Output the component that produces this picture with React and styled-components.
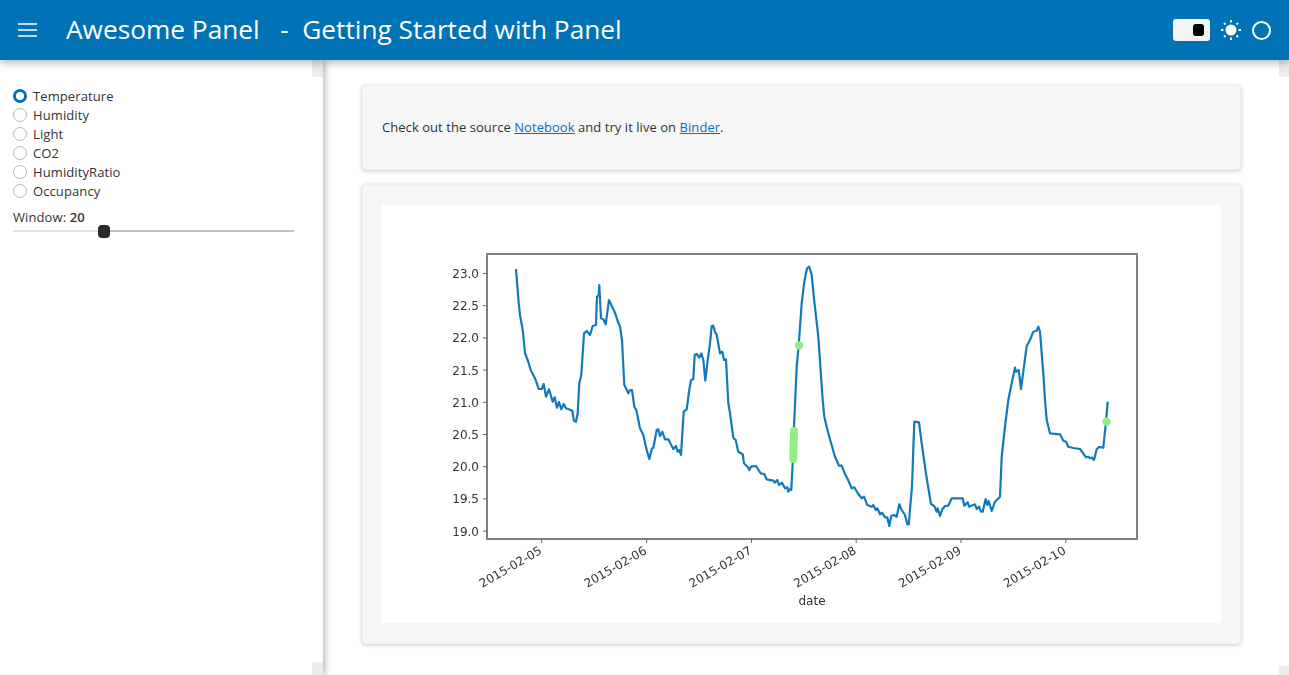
import React from "react";
import styled, { createGlobalStyle } from "styled-components";

const GlobalStyle = createGlobalStyle`
  html, body {
    margin: 0;
    padding: 0;
    height: 100%;
    overflow: hidden;
    background: #ffffff;
    font-family: "Open Sans", "Noto Sans", sans-serif;
    color: #333333;
  }
  #root { height: 100%; }
`;

const Page = styled.div`
  height: 100vh;
  display: flex;
  flex-direction: column;
  overflow: hidden;
`;

const Header = styled.header`
  position: relative;
  z-index: 3;
  height: 60px;
  flex: none;
  display: flex;
  align-items: center;
  padding: 0 18px 0 18px;
  background: #0072b5;
  color: #ffffff;
  box-shadow: 0 3px 8px rgba(0, 0, 0, 0.28);
`;

const MenuIcon = styled.svg`
  width: 19px;
  height: 14px;
  flex: none;
  margin-right: 29px;
`;

const Title = styled.h1`
  margin: 0;
  flex: 1;
  font-size: 26.25px;
  font-weight: 400;
  white-space: pre;
  line-height: 59px;
  height: 60px;
`;

const HeaderTools = styled.div`
  display: flex;
  align-items: center;
`;

const Toggle = styled.div`
  width: 37px;
  height: 22px;
  box-sizing: border-box;
  padding-right: 6px;
  display: flex;
  align-items: center;
  justify-content: flex-end;
  background: #f4f4f4;
  border-radius: 3px;
  margin-right: 10px;
`;

const ToggleKnob = styled.span`
  width: 11px;
  height: 12px;
  background: #000000;
  border-radius: 3px;
`;

const SunIcon = styled.svg`
  width: 22px;
  height: 22px;
  margin-right: 10px;
`;

const MoonRing = styled.span`
  width: 19px;
  height: 19px;
  box-sizing: border-box;
  border: 2.5px solid #ffffff;
  border-radius: 50%;
`;

const Body = styled.div`
  position: relative;
  flex: 1;
  display: flex;
  min-height: 0;
`;

const Sidebar = styled.aside`
  position: relative;
  z-index: 2;
  width: 323px;
  flex: none;
  box-sizing: border-box;
  padding: 26px 29px 0 13px;
  background: #ffffff;
  box-shadow: 2px 0 7px rgba(0, 0, 0, 0.3);
`;

const ScrollStub = styled.div`
  position: absolute;
  right: ${(p) => p.$right}px;
  ${(p) => (p.$bottom ? "bottom: 0;" : "top: 0;")}
  width: ${(p) => p.$width}px;
  height: ${(p) => p.$height}px;
  background: #ececec;
`;

const RadioRow = styled.label`
  display: flex;
  align-items: center;
  height: 19px;
  font-size: 13px;
  letter-spacing: 0.1px;
`;

const RadioDot = styled.span`
  width: 14px;
  height: 14px;
  flex: none;
  box-sizing: border-box;
  margin-right: 6px;
  border-radius: 50%;
  background: #ffffff;
  border: ${(p) => (p.$checked ? "3.5px solid #0072b5" : "1px solid #b9b9b9")};
`;

const SliderLabel = styled.div`
  margin-top: 8px;
  height: 19px;
  line-height: 19px;
  font-size: 13px;
  letter-spacing: 0.1px;
  b { font-weight: 600; }
`;

const SliderTrack = styled.div`
  position: relative;
  margin-top: -3px;
  height: 14px;
  display: flex;
  align-items: center;
`;

const SliderRail = styled.div`
  flex: ${(p) => p.$grow};
  height: 1.5px;
  background: ${(p) => p.$color};
`;

const SliderHandle = styled.span`
  width: 12px;
  height: 13px;
  flex: none;
  background: #2b2b2b;
  border-radius: 4px;
`;

const Main = styled.main`
  flex: 1;
  min-width: 0;
  position: relative;
  box-sizing: border-box;
  padding: 25px 48px 0 39px;
  display: flex;
  flex-direction: column;
  gap: 14px;
`;

const Card = styled.section`
  box-sizing: border-box;
  height: ${(p) => p.$height}px;
  background: #f6f6f6;
  border: 1px solid #efefef;
  border-radius: 4px;
  box-shadow: 0 1px 4px rgba(0, 0, 0, 0.22);
  padding: ${(p) => p.$padding};
  display: flex;
  align-items: ${(p) => p.$align || "stretch"};
`;

const Intro = styled.p`
  margin: 0 0 2px;
  font-size: 13px;
  letter-spacing: 0.05px;
  color: #333333;
  a { color: #0d6cc0; text-decoration: underline; }
`;

const PlotFrame = styled.div`
  flex: 1;
  background: #ffffff;
  display: flex;
`;

const PlotSvg = styled.svg`
  display: block;
  width: 839px;
  height: 418px;
  filter: blur(0.35px);
  text {
    font-family: "DejaVu Sans", sans-serif;
    font-size: 12px;
    fill: #333333;
  }
`;

const measures = ["Temperature", "Humidity", "Light", "CO2", "HumidityRatio", "Occupancy"];
const yTicks = ["23.0", "22.5", "22.0", "21.5", "21.0", "20.5", "20.0", "19.5", "19.0"];
const xTicks = [
  [541.7, "2015-02-05"],
  [646.6, "2015-02-06"],
  [751.5, "2015-02-07"],
  [856.2, "2015-02-08"],
  [961, "2015-02-09"],
  [1065.8, "2015-02-10"],
];

// traced from the plot, page coordinates
const series = `516,269 518.7,303 520,315 522.7,330 525,353 528.3,362 530.7,370 533.3,375 535.7,380 538.7,389
541.7,389 543.7,384 546,396.7 549,389.3 552.7,401.7 554.7,397.3 557,407.7 559,402 561.3,409.3 563.7,404 566,408.3 570.7,410
572.3,411 574,420.7 576,421.7 577.7,413 579.3,383.3 581.3,375 584,333.3 586.7,331 590,335 592.7,326 596,325 597,296.7
598.7,295 599.3,285 601,318.3 603.3,319.3 605.7,324.3 609,300 611.7,305.7 615,312.7 617.3,320 620,326.7 622,340 624.3,385
626,388.3 628.3,393.3 630,390 632,390 634.3,406.7 636.3,410 640,428.3 643.3,435 646.7,450 649.3,459 652,448.3 653.3,448
656.7,430 658.3,429.3 660,436 662.3,431.7 665,439.3 668.3,439.3 673.3,449 676,446 677.7,451.7 679.3,450 681,455 683.7,411.7
686.7,409.3 689.3,390 691,380 693.3,379.3 694.7,355 696.7,354 699.3,357.7 701.3,353.3 703.3,360 705.3,380.7 707.7,360 710,343.3
711.7,326 713.3,325.7 715,331.7 716.7,335 720,353.3 722.3,351.7 724,360 726,359.3 728.3,403.3 730,413.3 733.3,437.7 735.7,440
738.3,451.7 742.7,454.3 744,463.3 748.3,467.7 749.3,470 751,466.7 756,466 760.7,473.3 764.3,474 766.7,479.3 773.3,480.7
774.7,482.7 777.3,480 779,485 782,482.7 785,488.3 787.3,487.3 788.3,491.7 790.7,488.3 791.3,490 792.7,463.3 794,426.7
796.7,366.7 798.7,345 801.7,303.3 804.3,281.7 807,268.3 809.3,266.7 811.7,275 814,298.3 818.3,336.7 822.7,400 824.3,416.7
828.3,433.3 835,456.7 839,465.7 841.7,465.7 845,474 847.7,479 851.7,488.3 854.3,487.3 858.3,494 861.7,498.3 864,496.7
867.3,505 871.7,506.7 873.3,505 875.7,510 877.3,508.3 880,514.3 882,512.7 885,517.3 887.3,517.3 889.3,526 891.3,515.7
894,515 896.7,516.7 899.3,504.3 901.7,510 905,515 907.3,524.3 908.7,524.3 912,486.7 914.3,421.7 919,422.3 921.7,443.3
926.7,478.3 931,504 934.3,506 936.7,511.7 937.7,508.3 940,516 942.3,509.3 945,506 948.3,505.7 951.7,498.3 962.7,498.3
964.3,505.7 967.7,502.3 969,506.7 975,504.3 976.7,509 979,506.7 981,511.7 982.7,511.7 985.7,499 987.3,505 988.7,501
991.7,511 995,501.7 1000,496.7 1001.7,456.7 1005,426.7 1008.3,400 1011.7,383.3 1015,367.7 1016,371.7 1018.7,370 1021,389
1023.3,371.7 1026.7,346 1030,340 1033.3,331.7 1036.7,330.7 1038.3,326.7 1040,331.7 1043.3,373.3 1045,400 1046.7,420 1050,433.3
1060,434.3 1063.3,440.7 1066,441.7 1068.3,446.7 1073.3,448 1080,449 1086,457.3 1088.3,456.7 1090,458.3 1092,457.5 1094,460
1096.7,449.3 1099,447 1103.3,447.7 1106,421.7 1107.7,401.7`;

function Plot() {
  return (
    <PlotSvg viewBox="382 205 839 418">
      <rect x="487" y="254" width="650" height="285" fill="none" stroke="#808080" strokeWidth="2" />
      {yTicks.map((t, i) => {
        const y = 273.5 + i * 32.2;
        return (
          <g key={t}>
            <line x1="483" x2="487" y1={y} y2={y} stroke="#666666" strokeWidth="1" />
            <text x="479" y={y + 4.5} textAnchor="end">{t}</text>
          </g>
        );
      })}
      {xTicks.map(([x, t]) => (
        <g key={t}>
          <line x1={x} x2={x} y1="539" y2="543" stroke="#666666" strokeWidth="1" />
          <text transform={`translate(${x + 1} 553) rotate(-30)`} textAnchor="end">{t}</text>
        </g>
      ))}
      <text x="812" y="605" textAnchor="middle">date</text>
      <polyline points={series} fill="none" stroke="#1479bb" strokeWidth="2.2" strokeLinejoin="round" />
      <line x1="794" y1="431" x2="793.3" y2="459" stroke="#90ee85" strokeWidth="8" strokeLinecap="round" />
      <circle cx="799" cy="345.5" r="4.2" fill="#90ee85" />
      <circle cx="1106.5" cy="421.7" r="4.2" fill="#90ee85" />
    </PlotSvg>
  );
}

export default function App() {
  return (
    <Page>
      <GlobalStyle />
      <Header>
        <MenuIcon viewBox="0 0 19 14">
          <path d="M0 1h19M0 7h19M0 13h19" stroke="#ffffff" strokeWidth="1.6" fill="none" />
        </MenuIcon>
        <Title>{"Awesome Panel   -  Getting Started with Panel"}</Title>
        <HeaderTools>
          <Toggle><ToggleKnob /></Toggle>
          <SunIcon viewBox="0 0 22 22">
            <circle cx="11" cy="11" r="5.5" fill="#ffffff" />
            <path
              d="M11 1v2.4M11 18.6V21M1 11h2.4M18.6 11H21M4 4l1.5 1.5M16.5 16.5L18 18M4 18l1.5-1.5M16.5 5.5L18 4"
              stroke="#ffffff"
              strokeWidth="1.8"
              fill="none"
            />
          </SunIcon>
          <MoonRing />
        </HeaderTools>
      </Header>
      <Body>
        <Sidebar>
          {measures.map((m, i) => (
            <RadioRow key={m}>
              <RadioDot $checked={i === 0} />
              {m}
            </RadioRow>
          ))}
          <SliderLabel>Window: <b>20</b></SliderLabel>
          <SliderTrack>
            <SliderRail $grow={85} $color="#e2e2e2" />
            <SliderHandle />
            <SliderRail $grow={184} $color="#c0c0c0" />
          </SliderTrack>
          <ScrollStub $right={0} $width={11} $height={17} />
          <ScrollStub $right={0} $width={11} $height={13} $bottom />
        </Sidebar>
        <Main>
          <Card $height={85} $padding="0 19px" $align="center">
            <Intro>
              Check out the source <a href="#notebook">Notebook</a> and try it live on{" "}
              <a href="#binder">Binder</a>.
            </Intro>
          </Card>
          <Card $height={460} $padding="20px 19px">
            <PlotFrame>
              <Plot />
            </PlotFrame>
          </Card>
          <ScrollStub $right={0} $width={10} $height={17} />
          <ScrollStub $right={0} $width={10} $height={9} $bottom />
        </Main>
      </Body>
    </Page>
  );
}
